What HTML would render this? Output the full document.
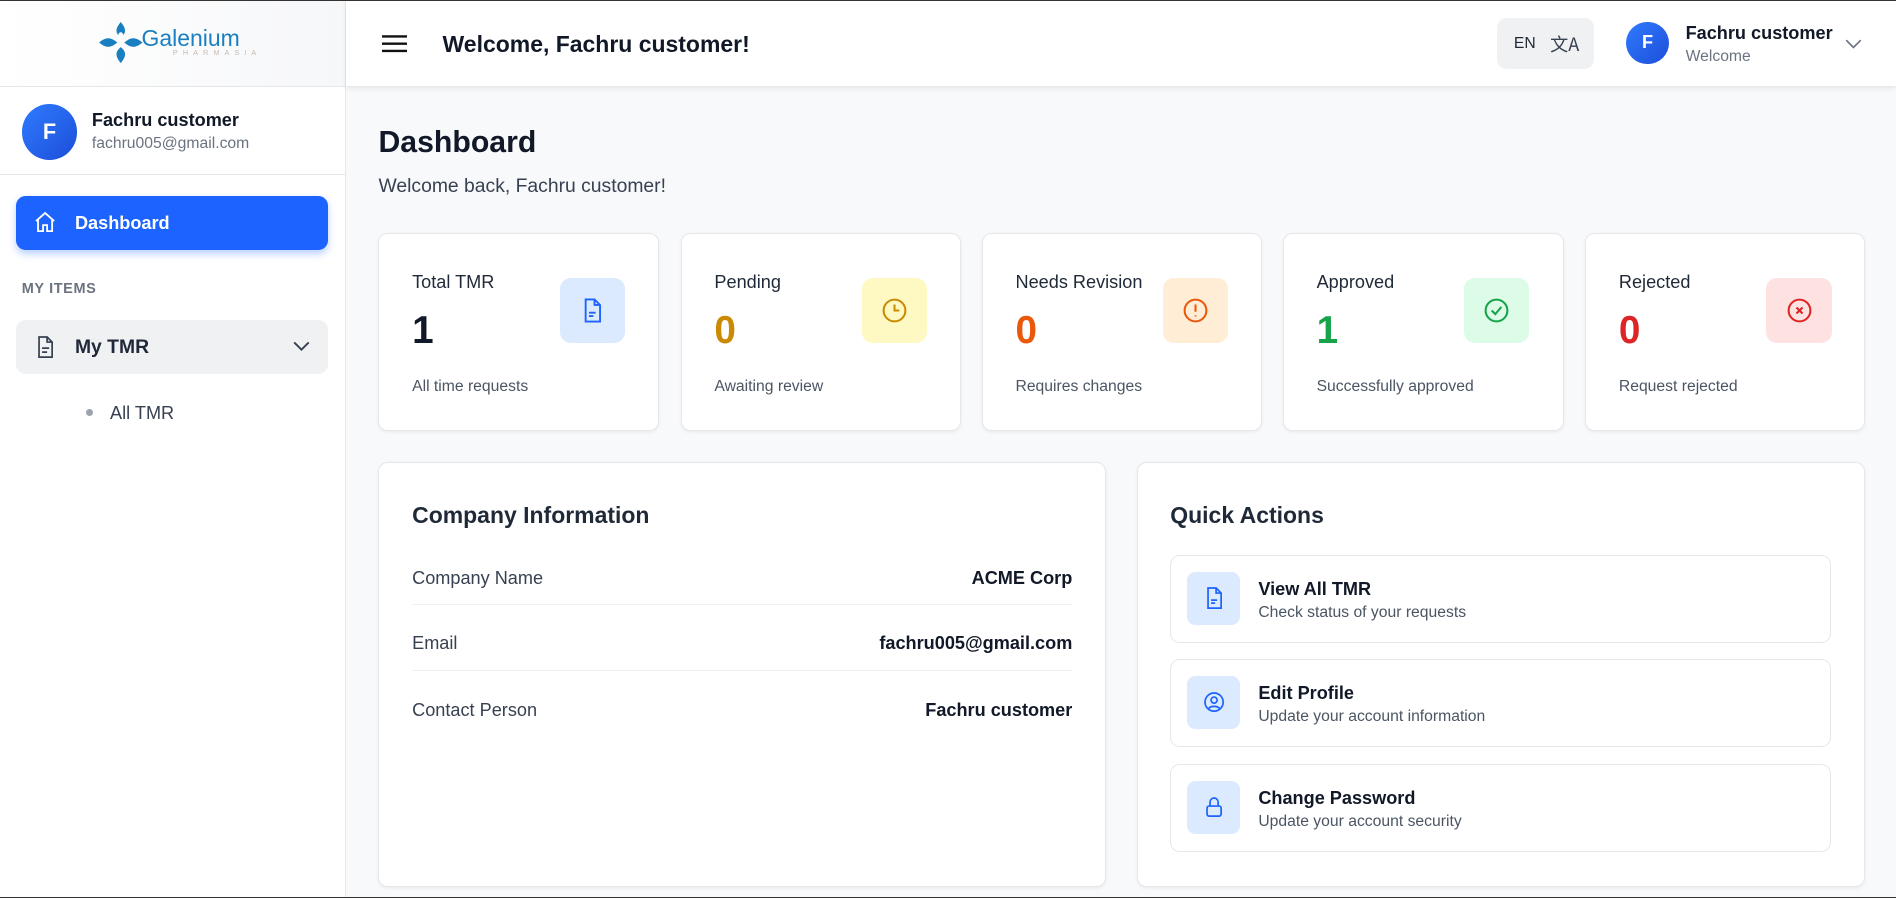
<!DOCTYPE html>
<html><head><meta charset="utf-8"><style>
html,body{margin:0;padding:0}
body{width:1568px;height:743px;zoom:1.20918;overflow:hidden;font-family:"Liberation Sans","DejaVu Sans",sans-serif;background:#f8f9fb;position:relative;color:#111827}
.abs{position:absolute}
#top{position:absolute;left:0;top:0;width:1568px;height:1px;background:#333;z-index:5}
#side{left:0;top:0;width:285px;height:743px;background:#fff;border-right:1px solid #e5e7eb}
#logo{left:0;top:0;width:285px;height:71px;border-bottom:1px solid #e5e7eb;background:linear-gradient(90deg,#fff,#f6f7f9)}
#hdr{left:286px;top:0;width:1282px;height:71px;background:#fff;box-shadow:0 2px 4px rgba(0,0,0,.08)}
.av{border-radius:50%;background:linear-gradient(135deg,#2f7bff,#1d4ed8);color:#fff;font-weight:bold;display:flex;align-items:center;justify-content:center}
.card{position:absolute;background:#fff;border:1px solid #e5e7eb;border-radius:8px;box-shadow:0 1px 3px rgba(0,0,0,.06)}
.sc .t{position:absolute;left:27px;top:31px;font-size:15px;color:#1f2937}
.sc .n{position:absolute;left:27px;top:62px;font-size:32px;font-weight:bold}
.sc .s{position:absolute;left:27px;top:119px;font-size:13px;color:#4b5563}
.sc .ic{position:absolute;left:149px;top:36px;width:54px;height:54px;border-radius:9px;display:flex;align-items:center;justify-content:center}
.row{position:absolute;left:27px;width:546px;height:54px;border-bottom:1px solid #eef0f3;font-size:15px;color:#374151}
.row span{position:absolute;top:24px}
.row b{position:absolute;right:0;top:24px;color:#111827}
.qa{position:absolute;left:27px;width:545px;height:71px;border:1px solid #e5e7eb;border-radius:8px}
.qa .ic{position:absolute;left:13px;top:13px;width:44px;height:44px;border-radius:7px;background:#dbeafe;display:flex;align-items:center;justify-content:center}
.qa .a{position:absolute;left:72px;top:19px;font-size:15px;font-weight:bold}
.qa .b{position:absolute;left:72px;top:40px;font-size:13px;color:#4b5563}
</style></head><body>
<div id="top"></div>
<div id="side" class="abs">
 <div id="logo" class="abs">
  <svg class="abs" style="left:82px;top:18px" width="36" height="34" viewBox="0 0 38 36"><g fill="#1a7fc1"><path d="M19 0 C14 6 14 10 19 13 C24 10 24 6 19 0Z"/><path d="M19 36 C14 30 14 26 19 22 C24 26 24 30 19 36Z"/><path d="M0 18 C6 13 10 13 16 18 C10 23 6 23 0 18Z"/><path d="M38 18 C32 13 28 13 22 18 C28 23 32 23 38 18Z"/></g><circle cx="19" cy="11" r="2" fill="#fff"/></svg>
  <div class="abs" style="left:117px;top:21px;font-size:19px;color:#1a7fc1">Galenium</div>
  <div class="abs" style="left:143px;top:40px;font-size:6px;letter-spacing:4.2px;color:#c7b8b0">PHARMASIA</div>
 </div>
 <div class="abs av" style="left:18px;top:86px;width:46px;height:46px;font-size:18px">F</div>
 <div class="abs" style="left:76px;top:91px;font-size:15px;font-weight:bold">Fachru customer</div>
 <div class="abs" style="left:76px;top:112px;font-size:13px;color:#6b7280">fachru005@gmail.com</div>
 <div class="abs" style="left:0;top:144px;width:285px;height:1px;background:#e5e7eb"></div>
 <div class="abs" style="left:13px;top:162px;width:258px;height:45px;background:#1d63ff;border-radius:8px;box-shadow:0 3px 6px rgba(29,99,255,.3)">
  <svg class="abs" style="left:14px;top:12px" width="20" height="20" viewBox="0 0 24 24" fill="none" stroke="#fff" stroke-width="1.8"><path d="M3 11 12 3l9 8M5 9v12h5v-6h4v6h5V9"/></svg>
  <div class="abs" style="left:49px;top:14px;color:#fff;font-weight:bold;font-size:15px">Dashboard</div>
 </div>
 <div class="abs" style="left:18px;top:232px;font-size:12px;font-weight:bold;color:#6b7280;letter-spacing:.5px">MY ITEMS</div>
 <div class="abs" style="left:13px;top:265px;width:258px;height:44px;background:#f0f1f3;border-radius:8px">
  <svg class="abs" style="left:14px;top:12px" width="20" height="20" viewBox="0 0 24 24" fill="none" stroke="#374151" stroke-width="1.7"><path d="M6 2h8l5 5v15H6z M14 2v5h5 M9 13h7 M9 17h5"/></svg>
  <div class="abs" style="left:49px;top:13px;font-size:16px;font-weight:bold;color:#1f2937">My TMR</div>
  <svg class="abs" style="left:229px;top:16px" width="14" height="10" viewBox="0 0 14 10" fill="none" stroke="#374151" stroke-width="1.6"><path d="M1 2l6 6 6-6"/></svg>
 </div>
 <div class="abs" style="left:71px;top:338px;width:6px;height:6px;border-radius:50%;background:#9ca3af"></div>
 <div class="abs" style="left:91px;top:333px;font-size:15px;color:#374151">All TMR</div>
</div>
<div id="hdr" class="abs">
 <svg class="abs" style="left:30px;top:28px" width="21" height="16" viewBox="0 0 21 16" stroke="#111" stroke-width="2"><path d="M0 2h21M0 8h21M0 14h21"/></svg>
 <div class="abs" style="left:80px;top:26px;font-size:19px;font-weight:bold;color:#111827">Welcome, Fachru customer!</div>
 <div class="abs" style="left:952px;top:15px;width:80px;height:42px;background:#f0f1f3;border-radius:8px">
  <div class="abs" style="left:14px;top:14px;font-size:13px;color:#1f2937">EN</div>
  <div class="abs" style="left:44px;top:11px;font-size:15px;color:#374151;font-family:'Noto Sans CJK SC',sans-serif">文A</div>
 </div>
 <div class="abs av" style="left:1059px;top:18px;width:35px;height:35px;font-size:15px">F</div>
 <div class="abs" style="left:1108px;top:19px;font-size:15px;font-weight:bold">Fachru customer</div>
 <div class="abs" style="left:1108px;top:40px;font-size:13px;color:#6b7280">Welcome</div>
 <svg class="abs" style="left:1240px;top:32px" width="14" height="9" viewBox="0 0 14 9" fill="none" stroke="#6b7280" stroke-width="1.4"><path d="M1 1l6 6 6-6"/></svg>
</div>
<div class="abs" style="left:313px;top:104px;font-size:25px;font-weight:bold">Dashboard</div>
<div class="abs" style="left:313px;top:145px;font-size:16px;color:#374151">Welcome back, Fachru customer!</div>

<div class="card sc" style="left:313px;top:193px;width:230px;height:162px"><div class="t">Total TMR</div><div class="n" style="color:#111827">1</div><div class="s">All time requests</div><div class="ic" style="background:#dbeafe"><svg width="22" height="24" viewBox="0 0 24 24" fill="none" stroke="#1d63ff" stroke-width="1.7"><path d="M6 2h8l5 5v15H6z M14 2v5h5 M9 14h6 M9 17h4"/></svg></div></div>
<div class="card sc" style="left:563px;top:193px;width:230px;height:162px"><div class="t">Pending</div><div class="n" style="color:#ca8a04">0</div><div class="s">Awaiting review</div><div class="ic" style="background:#fef9c3"><svg width="24" height="24" viewBox="0 0 24 24" fill="none" stroke="#ca8a04" stroke-width="1.7"><circle cx="12" cy="12" r="9"/><path d="M12 7v5h4"/></svg></div></div>
<div class="card sc" style="left:812px;top:193px;width:230px;height:162px"><div class="t">Needs Revision</div><div class="n" style="color:#ea580c">0</div><div class="s">Requires changes</div><div class="ic" style="background:#ffedd5"><svg width="24" height="24" viewBox="0 0 24 24" fill="none" stroke="#ea580c" stroke-width="1.7"><circle cx="12" cy="12" r="9"/><path d="M12 7v6M12 16v1"/></svg></div></div>
<div class="card sc" style="left:1061px;top:193px;width:231px;height:162px"><div class="t">Approved</div><div class="n" style="color:#16a34a">1</div><div class="s">Successfully approved</div><div class="ic" style="background:#dcfce7"><svg width="24" height="24" viewBox="0 0 24 24" fill="none" stroke="#16a34a" stroke-width="1.7"><circle cx="12" cy="12" r="9"/><path d="M8 12l3 3 5-6"/></svg></div></div>
<div class="card sc" style="left:1311px;top:193px;width:230px;height:162px"><div class="t">Rejected</div><div class="n" style="color:#dc2626">0</div><div class="s">Request rejected</div><div class="ic" style="background:#fee2e2"><svg width="24" height="24" viewBox="0 0 24 24" fill="none" stroke="#dc2626" stroke-width="1.7"><circle cx="12" cy="12" r="9"/><path d="M9.5 9.5l5 5M14.5 9.5l-5 5"/></svg></div></div>

<div class="card" style="left:313px;top:382px;width:600px;height:350px">
 <div class="abs" style="left:27px;top:32px;font-size:19px;font-weight:bold;color:#1f2937">Company Information</div>
 <div class="row" style="top:63px"><span>Company Name</span><b>ACME Corp</b></div>
 <div class="row" style="top:117px"><span>Email</span><b>fachru005@gmail.com</b></div>
 <div class="row" style="top:172px;border:none"><span>Contact Person</span><b>Fachru customer</b></div>
</div>
<div class="card" style="left:940px;top:382px;width:601px;height:350px">
 <div class="abs" style="left:27px;top:32px;font-size:19px;font-weight:bold;color:#1f2937">Quick Actions</div>
 <div class="qa" style="top:76px"><div class="ic"><svg width="20" height="20" viewBox="0 0 24 24" fill="none" stroke="#1d63ff" stroke-width="1.7"><path d="M6 2h8l5 5v15H6z M14 2v5h5 M9 14h6 M9 17h4"/></svg></div><div class="a">View All TMR</div><div class="b">Check status of your requests</div></div>
 <div class="qa" style="top:162px"><div class="ic"><svg width="20" height="20" viewBox="0 0 24 24" fill="none" stroke="#1d63ff" stroke-width="1.7"><circle cx="12" cy="12" r="9"/><circle cx="12" cy="10" r="3"/><path d="M6.5 18.5c2-3 9-3 11 0"/></svg></div><div class="a">Edit Profile</div><div class="b">Update your account information</div></div>
 <div class="qa" style="top:249px"><div class="ic"><svg width="20" height="20" viewBox="0 0 24 24" fill="none" stroke="#1d63ff" stroke-width="1.7"><rect x="5" y="11" width="14" height="10" rx="2"/><path d="M8 11V7a4 4 0 0 1 8 0v4"/></svg></div><div class="a">Change Password</div><div class="b">Update your account security</div></div>
</div>
<div class="abs" style="left:0;top:742px;width:1568px;height:1px;background:#333"></div>
</body></html>
